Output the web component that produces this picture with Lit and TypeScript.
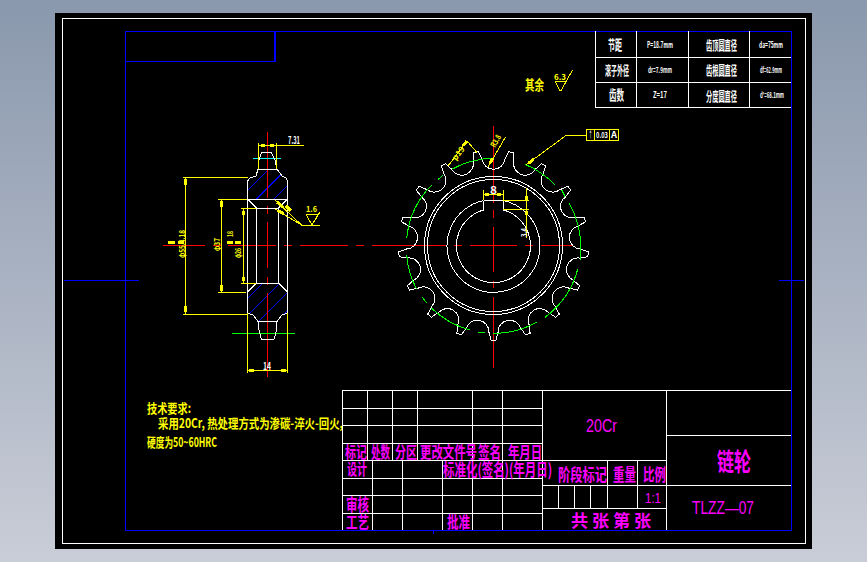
import { LitElement, html, svg, css } from "lit";
import { customElement } from "lit/decorators.js";

type L = [number, number, number, number];
const CX = 493.5, CY = 245.5;
const pol = (r: number, deg: number) => {
  const t = (deg * Math.PI) / 180;
  return `${(CX + r * Math.cos(t)).toFixed(2)} ${(CY + r * Math.sin(t)).toFixed(2)}`;
};

function sprocketPath() {
  const n = 17, p = 360 / n, R = 87, tip = 95;
  let d = "";
  for (let k = 0; k < n; k++) {
    const a = 90 + k * p;
    d += `${k === 0 ? "M" : "L"}${pol(R, a - 3)} Q${pol(91, a - 2)} ${pol(tip, a - 1.5)} L${pol(tip, a + 1.5)} Q${pol(91, a + 2)} ${pol(R, a + 3)} `;
    d += `A11.6 11.6 0 0 0 ${pol(R, a + p - 3)} `;
  }
  return d + "Z";
}

const emWidth = (s: string) =>
  [...s].reduce((w, c) => w + (c.charCodeAt(0) > 0x2000 ? 1 : c === " " ? 0.3 : c === "." || c === "," ? 0.3 : 0.58), 0);

const sheetLines: L[] = [[125, 61.5, 275, 61.5]];

const tableH: L[] = [[595, 57.5, 791, 57.5], [595, 82.5, 791, 82.5], [595, 107.5, 791, 107.5]];
const tableV: L[] = [[595.5, 31, 595.5, 107], [636.5, 31, 636.5, 107], [688.5, 31, 688.5, 107], [749.5, 31, 749.5, 107]];

const titleLines: L[] = [
  [342.5, 390.5, 791, 390.5], [342.5, 408.5, 542, 408.5], [342.5, 425.5, 542, 425.5], [342.5, 443.5, 542, 443.5],
  [342.5, 460.5, 666, 460.5], [342.5, 478.5, 542, 478.5], [342.5, 495.5, 542, 495.5], [342.5, 513.5, 542, 513.5],
  [666.5, 435.5, 791, 435.5], [542, 485.5, 791, 485.5], [542, 508.5, 666, 508.5],
  [342.5, 390, 342.5, 530], [367.5, 390, 367.5, 460], [392.5, 390, 392.5, 460], [417.5, 390, 417.5, 460],
  [472.5, 390, 472.5, 530], [502.5, 390, 502.5, 530], [542.5, 390, 542.5, 530], [372.5, 460, 372.5, 530],
  [402.5, 460, 402.5, 530], [442.5, 460, 442.5, 530], [666.5, 390, 666.5, 530], [607.5, 460, 607.5, 508],
  [637.5, 460, 637.5, 508], [558.5, 485, 558.5, 508], [574.5, 485, 574.5, 508], [590.5, 485, 590.5, 508],
];

const sideWhite: L[] = [
  [258, 169.5, 277, 169.5], [247.5, 199.5, 287.5, 199.5], [256, 208.5, 278, 208.5], [256, 283.5, 278, 283.5],
  [258, 321.5, 277, 321.5], [247.5, 180, 247.5, 313], [287.5, 180, 287.5, 313], [256.5, 208, 256.5, 283],
  [278.5, 208, 278.5, 283], [247.5, 199, 256.5, 208], [287.5, 199, 278.5, 208], [247.5, 292, 256.5, 283], [287.5, 292, 278.5, 283],
];
const sideOutline = [
  "M258 169 L256 176 L250 178 L247.5 181",
  "M277 169 L282 176 L286 178 L287.5 181",
  "M258 169 L259 160 L261.5 152.5 L271.5 152.5 L275 160 L277 169",
  "M247.5 313 L253 315 L258 321.5 L259 330 L261.5 339.5 L274 339.5 L276.5 330 L277 321.5 L282 315 L287.5 313",
];
const hatchUp = [438, 455.5, 473, 490.5];
const hatchDown = [546, 563, 580, 598];

const yellow: L[] = [
  [258, 145.5, 304, 145.5], [258.5, 143, 258.5, 169], [276.5, 143, 276.5, 169],
  [183, 177.5, 248, 177.5], [185.5, 177, 185.5, 314], [183, 314.5, 248, 314.5],
  [218, 199.5, 247, 199.5], [221.5, 199, 221.5, 292], [218, 292.5, 246, 292.5],
  [241, 208.5, 256, 208.5], [243.5, 208, 243.5, 283], [241, 283.5, 256, 283.5],
  [247.5, 313, 247.5, 373], [287.5, 313, 287.5, 373], [247, 370.5, 288, 370.5],
  [275, 200, 301.5, 225], [275, 209, 301.5, 225], [301, 225.5, 320, 225.5],
  [306, 214.5, 318, 214.5], [306, 214.5, 312, 225], [318, 214.5, 312, 225], [312, 225, 320, 212],
  [483.5, 190, 483.5, 200], [503.5, 190, 503.5, 200], [483, 194.5, 504, 194.5],
  [503, 200.5, 529, 200.5], [503, 209.5, 529, 209.5], [526.5, 188, 526.5, 238],
  [566, 135.5, 526.5, 164.5], [566, 135.5, 586, 135.5],
  [448, 166, 467, 141], [467, 141, 477, 152.5], [488, 167, 505.5, 137],
  [555, 81.5, 566, 81.5], [555, 81.5, 560.5, 91.5], [566, 81.5, 560.5, 91.5], [560.5, 91.5, 572.5, 70],
  [586.5, 129.5, 618.5, 129.5], [586.5, 140.5, 618.5, 140.5], [586.5, 129, 586.5, 141], [618.5, 129, 618.5, 141],
  [594.5, 129, 594.5, 141], [609.5, 129, 609.5, 141],
];
const blobs: L[] = [
  [261, 145.5, 265, 145.5], [270, 145.5, 274, 145.5], [185.5, 179, 185.5, 185], [185.5, 306, 185.5, 312],
  [221.5, 201, 221.5, 207], [221.5, 285, 221.5, 291], [243.5, 211, 243.5, 215], [243.5, 277, 243.5, 281],
  [277, 202, 283, 207.5], [278, 210.5, 284, 214], [286, 206, 291, 211], [249, 370.5, 254, 370.5], [281, 370.5, 286, 370.5],
  [485, 194.5, 489, 194.5], [497, 194.5, 501, 194.5], [526.5, 196, 526.5, 200], [526.5, 211, 526.5, 215],
  [529, 163, 534, 159], [467, 141, 463, 146], [490, 163, 493, 158], [168, 242.5, 175, 242.5], [178, 242.5, 184, 242.5],
  [227, 242.5, 233, 242.5], [235, 242.5, 241, 242.5],
];
const red: L[] = [
  [493.5, 126, 493.5, 203], [493.5, 210, 493.5, 218], [493.5, 227, 493.5, 272], [493.5, 281, 493.5, 288], [493.5, 297, 493.5, 368],
  [267.5, 132, 267.5, 198], [267.5, 206, 267.5, 214], [267.5, 222, 267.5, 268], [267.5, 277, 267.5, 285], [267.5, 293, 267.5, 377],
  [163, 245.5, 205, 245.5], [213, 245.5, 221, 245.5], [228, 245.5, 276, 245.5], [284, 245.5, 292, 245.5], [300, 245.5, 348, 245.5],
  [356, 245.5, 364, 245.5], [372, 245.5, 447, 245.5], [454, 245.5, 462, 245.5], [470, 245.5, 517, 245.5], [525, 245.5, 533, 245.5], [541, 245.5, 573, 245.5],
];
const greenArcs: L[] = [
  [406.7, 255, 416.7, 289.3], [422.3, 297.3, 426.7, 302.7], [431.7, 308.3, 470, 330], [478.3, 332.3, 485, 333],
  [493.3, 333.3, 536.7, 322.3], [545, 317.3, 577.7, 269.3], [580, 260, 580.7, 240], [580.7, 245, 569.3, 203.3],
  [565, 196.7, 561.7, 190], [555, 185, 525, 164.3], [493.3, 158.3, 451.7, 169.3], [443.3, 175, 438.3, 179.3], [431.7, 185, 406.7, 238.3],
];

type T = [number, number, number, number, string];
const yellowText: T[] = [
  [525, 544, 85, 14, "其余"], [554, 566, 77, 8, "6.3"], [306, 317, 209, 8, "1.6"],
  [147, 191, 408, 13, "技术要求:"], [158, 343, 423, 13, "采用20Cr, 热处理方式为渗碳-淬火-回火,"], [147, 217, 442, 13, "硬度为50~60HRC"],
];
const whiteText: T[] = [
  [288, 300, 140, 10, "7.31"], [263, 271, 366, 10, "14"], [490, 497, 190, 10, "8"],
  [589, 592, 135, 9, "↑"], [596, 608, 135, 8, "0.03"], [611, 617, 135, 9, "A"],
  [608, 622, 45, 14, "节距"], [605, 629, 70, 13, "滚子外径"], [609, 624, 95, 14, "齿数"],
  [647, 673, 45, 9, "P=18.7mm"], [648, 672, 70, 8, "dr=7.9mm"], [653, 667, 95, 9, "Z=17"],
  [706, 737, 45, 13, "齿顶圆直径"], [706, 737, 70, 13, "齿根圆直径"], [706, 737, 96, 13, "分度圆直径"],
  [759, 783, 45, 9, "da=75mm"], [760, 782, 70, 8, "df=62.9mm"], [760, 784, 95, 8, "d'=68.1mm"],
];
const magentaText: T[] = [
  [345, 367, 452, 16, "标记"], [371, 390, 452, 16, "处数"], [395, 417, 452, 16, "分区"], [420, 477, 452, 16, "更改文件号"],
  [478, 501, 452, 16, "签名"], [508, 542, 452, 16, "年月日"],
  [347, 367, 469, 16, "设计"], [443, 552, 470, 17, "标准化(签名)(年月日)"], [558, 607, 475, 17, "阶段标记"],
  [613, 636, 475, 17, "重量"], [643, 666, 475, 17, "比例"], [346, 369, 505, 17, "审核"], [346, 369, 522, 16, "工艺"], [447, 470, 522, 16, "批准"],
  [717, 751, 461.5, 25, "链轮"], [571, 651, 520.5, 17, "共 张 第 张"],
];
const magentaLatin: T[] = [
  [586, 617, 425.5, 18, "20Cr"], [692, 754, 507.5, 18, "TLZZ—07"], [645, 661, 498, 14, "1:1"],
];
type R = [number, number, number, number, string, string];
const rotated: R[] = [
  [185, 258, 28, 8, "φ55.4.18", "ty"], [219.5, 251, 13, 8, "φ37", "ty"], [233, 237, 6, 7, "18", "ty"], [241, 258, 10, 8, "φ26", "ty"],
  [527, 237, 9, 8, "3.4", "tw"],
];

@customElement("app-root")
export class AppRoot extends LitElement {
  static styles = css`
    :host { display: block; width: 867px; height: 562px; padding: 13px 55px; box-sizing: border-box; overflow: hidden;
      background: linear-gradient(180deg, #8a98ad 0%, #c9cdd7 100%); }
    .sheet { width: 757px; height: 536px; background: #000; }
    .drawing { display: block; width: 757px; height: 536px; }
    .frame, .ln, .arc { fill: none; stroke-width: 1; shape-rendering: crispEdges; }
    .white { stroke: #fff; }
    .blue { stroke: #00f; }
    .blue2 { stroke: #00f; stroke-width: 2; }
    .yellow { stroke: #ff0; }
    .blob { stroke: #ff0; stroke-width: 3; }
    .red { stroke: #f00; }
    .green { stroke: #0f0; }
    .cyan { stroke: #0ff; }
    text { font-family: "Noto Sans CJK SC", "Liberation Sans", sans-serif; font-weight: 700; }
    .ty { fill: #ff0; }
    .tw { fill: #fff; }
    .tm { fill: #f0f; }
    .tl { fill: #f0f; font-family: "Liberation Sans", sans-serif; font-weight: 400; }
  `;

  private lines(list: L[], cls: string) {
    return list.map(([a, b, c, d]) => svg`<line class="ln ${cls}" x1=${a} y1=${b} x2=${c} y2=${d}></line>`);
  }

  private texts(list: T[], cls: string) {
    return list.map(([a, b, y, h, s]) => {
      const w = b - a;
      const fs = w / emWidth(s);
      return svg`<text class=${cls} transform="translate(${a} ${y + h * 0.38}) scale(1 ${(h / fs).toFixed(3)})"
        font-size=${fs.toFixed(2)} textLength=${w} lengthAdjust="spacingAndGlyphs">${s}</text>`;
    });
  }

  render() {
    return html`<div class="sheet">
      <svg class="drawing" viewBox="55 13 757 536">
        <defs>
          <clipPath id="hu"><path d="M258 169 L277 169 L282 176 L287 179 L287 199 L247 199 L247 180 L256 176Z"></path></clipPath>
          <clipPath id="hd"><path d="M256 284 L278 284 L287 292 L287 313 L282 315 L277 321 L258 321 L253 315 L247 313 L247 292Z"></path></clipPath>
        </defs>
        <rect class="frame white" x="62.5" y="18.5" width="743" height="525"></rect>
        <rect class="frame blue" x="125.5" y="31.5" width="665.5" height="499"></rect>
        ${this.lines(sheetLines, "blue")}
        ${this.lines([[274.5, 31, 274.5, 62]], "blue2")}
        ${this.lines([[64, 280.5, 139, 280.5], [779, 280.5, 804, 280.5], [433.5, 530, 433.5, 534]], "blue")}

        ${this.lines(tableH, "white")}${this.lines(tableV, "white")}
        ${this.lines(titleLines, "white")}

        <g clip-path="url(#hu)">${hatchUp.map((s) => svg`<line class="ln blue" x1=${s - 150} y1="150" x2=${s - 340} y2="340"></line>`)}</g>
        <g clip-path="url(#hd)">${hatchDown.map((s) => svg`<line class="ln blue" x1=${s - 280} y1="280" x2=${s - 330} y2="330"></line>`)}</g>

        ${this.lines(red, "red")}
        ${this.lines([[232, 333.5, 295, 333.5]], "green")}
        ${this.lines([[253, 158.5, 281, 158.5]], "cyan")}
        ${this.lines(sideWhite, "white")}
        ${sideOutline.map((d) => svg`<path class="ln white" d=${d}></path>`)}

        <path class="ln white" d=${sprocketPath()}></path>
        <circle class="ln white" cx=${CX} cy=${CY} r="69"></circle>
        <circle class="ln white" cx=${CX} cy=${CY} r="66"></circle>
        <path class="ln white" d="M483.5 200.5 L503.5 200.5 M483.5 200.5 L483.5 210 M503.5 200.5 L503.5 210"></path>
        <path class="ln white" d="M503.5 200.5 A46.5 46.5 0 1 1 483.5 200.5"></path>
        <path class="ln white" d="M503.5 210 A37 37 0 1 1 483.5 210"></path>
        ${greenArcs.map(([a, b, c, d]) => svg`<path class="arc green" d="M${a} ${b} A88 88 0 0 0 ${c} ${d}"></path>`)}

        ${this.lines(yellow, "yellow")}
        ${this.lines(blobs, "blob")}

        ${this.texts(yellowText, "ty")}
        ${this.texts(whiteText, "tw")}
        ${this.texts(magentaText, "tm")}
        ${this.texts(magentaLatin, "tl")}
        ${rotated.map(([x, y, w, h, s, c]) => {
          const fs = w / emWidth(s);
          return svg`<text class=${c} transform="translate(${x} ${y}) rotate(-90) scale(1 ${(h / fs).toFixed(3)})" font-size=${fs.toFixed(2)}
            textLength=${w} lengthAdjust="spacingAndGlyphs">${s}</text>`;
        })}
        <text class="ty" transform="translate(456 161) rotate(-52)" font-size="8" textLength="15" lengthAdjust="spacingAndGlyphs">p19</text>
        <text class="ty" transform="translate(495 148) rotate(-60)" font-size="8" textLength="13" lengthAdjust="spacingAndGlyphs">R3.8</text>
      </svg>
    </div>`;
  }
}
